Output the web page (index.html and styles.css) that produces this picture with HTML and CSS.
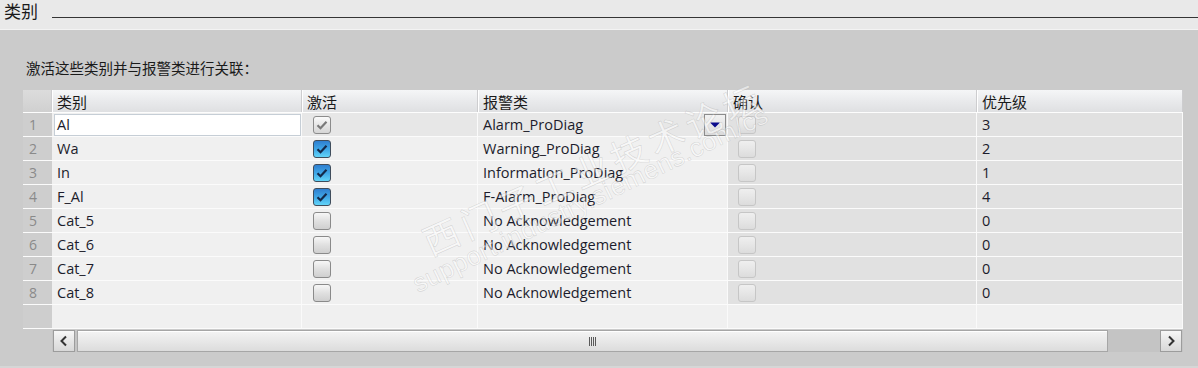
FILE: index.html
```html
<!DOCTYPE html>
<html lang="zh">
<head>
<meta charset="utf-8">
<title>类别</title>
<link rel="stylesheet" href="styles.css">
</head>
<body>
<div class="titlebar"><span class="title">类别</span><span class="rule"></span></div>
<div class="panel">
  <p class="hint">激活这些类别并与报警类进行关联：</p>
  <div class="table">
    <div class="row head">
      <div class="cell num"></div>
      <div class="cell">类别</div>
      <div class="cell">激活</div>
      <div class="cell">报警类</div>
      <div class="cell">确认</div>
      <div class="cell">优先级</div>
    </div>
    <div class="row sel">
      <div class="cell num">1</div>
      <div class="cell edit"><div class="input">Al</div></div>
      <div class="cell act"><span class="cb gray"><svg width="16" height="16" viewBox="0 0 16 16"><path d="M3.5 8.2l3 3 6-6.5" fill="none" stroke="#7a7a7a" stroke-width="2.2"/></svg></span></div>
      <div class="cell alarm">Alarm_ProDiag<span class="dd"><svg width="12" height="8" viewBox="0 0 12 8"><path d="M1 1.5h10l-5 5z" fill="#0b0b8c"/></svg></span></div>
      <div class="cell ro ack"><span class="cb dis"></span></div>
      <div class="cell ro">3</div>
    </div>
    <div class="row">
      <div class="cell num">2</div>
      <div class="cell">Wa</div>
      <div class="cell act"><span class="cb on"><svg width="16" height="16" viewBox="0 0 16 16"><path d="M3.5 8.2l3 3 6-6.5" fill="none" stroke="#14294a" stroke-width="2.2"/></svg></span></div>
      <div class="cell">Warning_ProDiag</div>
      <div class="cell ro ack"><span class="cb dis"></span></div>
      <div class="cell ro">2</div>
    </div>
    <div class="row">
      <div class="cell num">3</div>
      <div class="cell">In</div>
      <div class="cell act"><span class="cb on"><svg width="16" height="16" viewBox="0 0 16 16"><path d="M3.5 8.2l3 3 6-6.5" fill="none" stroke="#14294a" stroke-width="2.2"/></svg></span></div>
      <div class="cell">Information_ProDiag</div>
      <div class="cell ro ack"><span class="cb dis"></span></div>
      <div class="cell ro">1</div>
    </div>
    <div class="row">
      <div class="cell num">4</div>
      <div class="cell">F_Al</div>
      <div class="cell act"><span class="cb on"><svg width="16" height="16" viewBox="0 0 16 16"><path d="M3.5 8.2l3 3 6-6.5" fill="none" stroke="#14294a" stroke-width="2.2"/></svg></span></div>
      <div class="cell">F-Alarm_ProDiag</div>
      <div class="cell ro ack"><span class="cb dis"></span></div>
      <div class="cell ro">4</div>
    </div>
    <div class="row">
      <div class="cell num">5</div>
      <div class="cell">Cat_5</div>
      <div class="cell act"><span class="cb off"></span></div>
      <div class="cell">No Acknowledgement</div>
      <div class="cell ro ack"><span class="cb dis"></span></div>
      <div class="cell ro">0</div>
    </div>
    <div class="row">
      <div class="cell num">6</div>
      <div class="cell">Cat_6</div>
      <div class="cell act"><span class="cb off"></span></div>
      <div class="cell">No Acknowledgement</div>
      <div class="cell ro ack"><span class="cb dis"></span></div>
      <div class="cell ro">0</div>
    </div>
    <div class="row">
      <div class="cell num">7</div>
      <div class="cell">Cat_7</div>
      <div class="cell act"><span class="cb off"></span></div>
      <div class="cell">No Acknowledgement</div>
      <div class="cell ro ack"><span class="cb dis"></span></div>
      <div class="cell ro">0</div>
    </div>
    <div class="row">
      <div class="cell num">8</div>
      <div class="cell">Cat_8</div>
      <div class="cell act"><span class="cb off"></span></div>
      <div class="cell">No Acknowledgement</div>
      <div class="cell ro ack"><span class="cb dis"></span></div>
      <div class="cell ro">0</div>
    </div>
    <div class="row empty">
      <div class="cell num"></div>
      <div class="cell"></div>
      <div class="cell"></div>
      <div class="cell"></div>
      <div class="cell"></div>
      <div class="cell"></div>
    </div>
  </div>
  <div class="hscroll">
    <span class="sbtn"><svg width="10" height="12" viewBox="0 0 10 12"><path d="M7 1.5L2.5 6 7 10.5" fill="none" stroke="#333" stroke-width="2"/></svg></span>
    <span class="thumb"><svg width="8" height="9" viewBox="0 0 8 9"><path d="M.5 0v9M2.5 0v9M4.5 0v9M6.5 0v9" stroke="#5a5a5a" stroke-width="1"/></svg></span>
    <span class="track"></span>
    <span class="sbtn"><svg width="10" height="12" viewBox="0 0 10 12"><path d="M3 1.5L7.5 6 3 10.5" fill="none" stroke="#333" stroke-width="2"/></svg></span>
  </div>
  <div class="wm wm-big">西门子工业技术论坛</div>
  <div class="wm wm-small">support.industry.siemens.com/cs</div>
</div>
</body>
</html>
```
FILE: styles.css
```css
* { box-sizing: border-box; }
html, body { margin: 0; padding: 0; }
body {
  width: 1198px;
  height: 368px;
  overflow: hidden;
  background: #cbcbcb;
  font-family: "Open Sans", "Noto Sans CJK SC", sans-serif;
}
.titlebar {
  height: 30px;
  background: #e9e9e9;
  border-bottom: 1px solid #f3f3f3;
  display: flex;
  align-items: flex-start;
}
.title {
  font-family: "Noto Sans CJK SC", sans-serif;
  font-size: 17px;
  line-height: 22px;
  padding-left: 4px;
  color: #1a1a1a;
}
.rule {
  flex: 1;
  height: 1px;
  margin: 17px 0 0 14px;
  background: #353535;
}
.panel {
  position: relative;
  height: 338px;
  padding: 0 15px 0 23px;
  border-bottom: 2px solid #d6d6d6;
}
.hint {
  margin: 0;
  padding: 28px 0 0 3px;
  height: 60px;
  font-family: "Noto Sans CJK SC", sans-serif;
  font-size: 14.5px;
  line-height: 20px;
  color: #1a1a1a;
}
.table { width: 1160px; }
.row {
  display: grid;
  grid-template-columns: 29px 250px 176px 250px 249px 206px;
  height: 24px;
  border-bottom: 1px solid #fbfbfb;
}
.cell {
  display: flex;
  align-items: center;
  padding-left: 5px;
  background: #f0f0f0;
  border-right: 1px solid #fafafa;
  font-size: 14.5px;
  color: #1c1c2c;
  white-space: nowrap;
  overflow: hidden;
}
.cell.num {
  background: #cecece;
  color: #8a8a8a;
  padding-left: 6px;
  border-right: none;
  font-size: 14px;
}
.cell.ro { background: #e1e1e1; }
.row.empty .cell.ro { background: #f0f0f0; }
.head {
  height: 23px;
  border-bottom: 1px solid #fdfdfd;
}
.head .cell {
  background: linear-gradient(#f5f6f7, #e8e9eb 55%, #dfe0e2);
  border-right: 1px solid #cdcdcf;
  box-shadow: inset 1px 0 #ffffff;
  font-family: "Noto Sans CJK SC", sans-serif;
  font-size: 15px;
  color: #1a1a1a;
}
.head .cell.num { background: linear-gradient(#dcdcdc, #d0d0d0); box-shadow: none; }
.sel .act, .sel .alarm { background: #e7e7e7; }
.cell.edit { padding: 1px 0 1px 2px; }
.input {
  flex: 1;
  height: 22px;
  background: #ffffff;
  border: 1px solid #c6ced6;
  padding-left: 2px;
  display: flex;
  align-items: center;
}
.cell.act { padding-left: 11px; }
.cell.ack { padding-left: 10px; }
.cb {
  width: 18px;
  height: 18px;
  border-radius: 3px;
  display: flex;
  align-items: center;
  justify-content: center;
}
.cb.on {
  border: 1px solid #3f4d5c;
  background: linear-gradient(#2f7fd0, #3fa6e6 50%, #62d4f8);
}
.cb.gray {
  border: 1px solid #8c8c8c;
  background: linear-gradient(#fbfbfb, #e6e6e6 50%, #d6d6d6);
}
.cb.off {
  border: 1px solid #8a8a8a;
  background: linear-gradient(#f7f7f7, #e0e0e0 50%, #cfcfcf);
}
.cb.dis {
  border: 1px solid #c6c6c6;
  background: linear-gradient(#efefef, #e6e6e6 50%, #dcdcdc);
}
.alarm { padding-right: 1px; }
.dd {
  margin-left: auto;
  width: 22px;
  height: 22px;
  border: 1px solid #8c8c8c;
  background: linear-gradient(#f2f2f2, #dadada);
  display: flex;
  align-items: center;
  justify-content: center;
}
.hscroll {
  margin: 1px 0 0 29px;
  width: 1131px;
  height: 22px;
  padding: 0 1px;
  display: flex;
  gap: 2px;
  background: #c4c4c4;
}
.sbtn {
  width: 22px;
  height: 22px;
  border: 1px solid #9c9c9c;
  background: linear-gradient(#f7f7f7, #e6e6e6 50%, #d8d8d8);
  display: flex;
  align-items: center;
  justify-content: center;
}
.thumb {
  width: 1031px;
  height: 22px;
  border: 1px solid #a6a6a6;
  background: linear-gradient(#f4f4f4, #e8e8e8 50%, #dcdcdc);
  box-shadow: inset 0 1px #ffffff;
  display: flex;
  align-items: center;
  justify-content: center;
}
.track { flex: 1; }
.wm {
  position: absolute;
  white-space: nowrap;
  pointer-events: none;
  color: rgba(255, 255, 255, 0.5);
  -webkit-text-stroke: 0.6px rgba(120, 120, 120, 0.25);
  transform-origin: 0 50%;
}
.wm-big {
  left: 424px;
  top: 190px;
  font-family: "Noto Sans CJK SC", sans-serif;
  font-size: 36px;
  line-height: 44px;
  letter-spacing: 5px;
  transform: rotate(-24deg);
}
.wm-small {
  left: 414px;
  top: 240px;
  font-family: "Liberation Sans", sans-serif;
  font-size: 26px;
  line-height: 30px;
  letter-spacing: 0.5px;
  transform: rotate(-26deg);
}
```
